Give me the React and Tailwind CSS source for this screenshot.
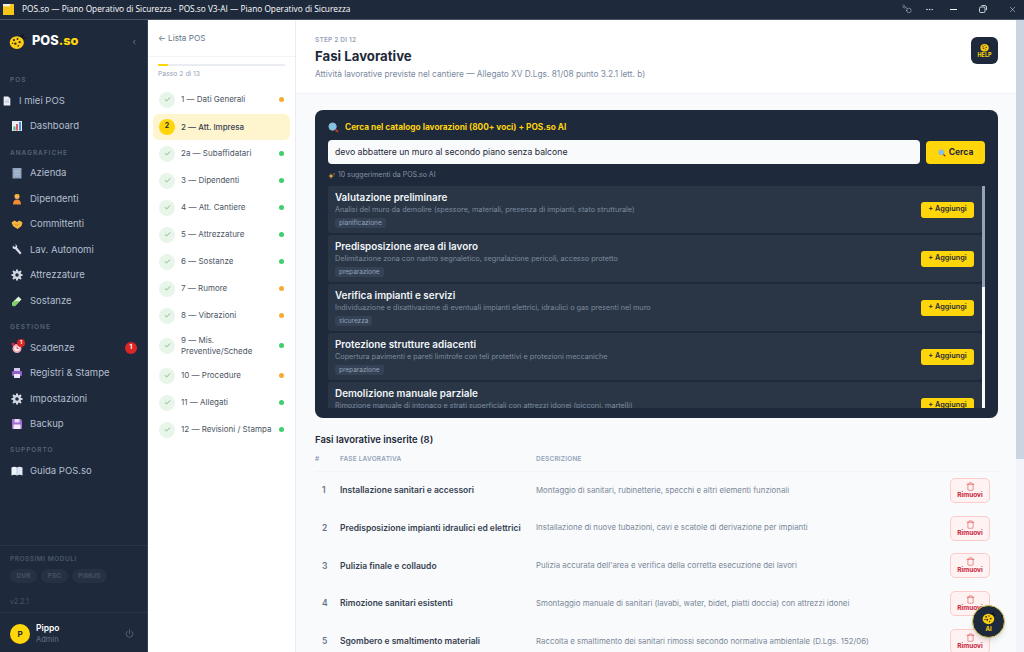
import React from "react";
import { Trash, Power, Check, Key, Ellipsis, X } from "lucide-react";

const Bug = ({ s = 16 }) => (
  <svg width={s} height={s} viewBox="0 0 24 24" className="shrink-0">
    <path d="M16 6 L21 2" stroke="#111" strokeWidth="1.6" />
    <path d="M18 8 L24 7" stroke="#111" strokeWidth="1.2" />
    <circle cx="17" cy="7" r="3.4" fill="#111827" />
    <ellipse cx="11" cy="13.5" rx="10" ry="9" fill="#facc15" />
    <circle cx="7" cy="10" r="1.6" fill="#3b2f0b" />
    <circle cx="12" cy="8.5" r="1.3" fill="#3b2f0b" />
    <circle cx="15" cy="13" r="1.6" fill="#3b2f0b" />
    <circle cx="9" cy="15" r="1.7" fill="#3b2f0b" />
    <circle cx="5" cy="14.5" r="1.1" fill="#3b2f0b" />
    <circle cx="13" cy="18" r="1.2" fill="#3b2f0b" />
  </svg>
);

const E = ({ n, s = 12 }) => {
  const m = {
    doc: <><path d="M4 1h11l5 5v17H4z" fill="#eef0f6" /><path d="M15 1l5 5h-5z" fill="#b9c0d4" /><path d="M7 10h10M7 13h10M7 16h10" stroke="#aab1c6" strokeWidth="1.2" /></>,
    chart: <><rect x="2" y="2" width="20" height="20" fill="#e8edf3" /><rect x="5" y="13" width="4" height="8" fill="#4caf7a" /><rect x="10" y="8" width="4" height="13" fill="#e0566b" /><rect x="16" y="4" width="4" height="17" fill="#4a90d9" /></>,
    building: <><rect x="3" y="2" width="18" height="21" fill="#8ea2bd" /><path d="M8 5v15M12 5v15M16 5v15" stroke="#c7d3e2" strokeWidth="2" strokeDasharray="2 1" /></>,
    person: <><circle cx="12" cy="7" r="5" fill="#f6b25e" /><path d="M4 23c0-7 3-10 8-10s8 3 8 10z" fill="#f08a35" /><path d="M7 5c1-4 9-4 10 0z" fill="#eab308" /></>,
    hands: <><path d="M1 9l6-4 5 3 5-3 6 4-2 7-8 6-9-6z" fill="#f5b63f" /><path d="M8 12l4 3 4-3" stroke="#c9831a" strokeWidth="1.5" fill="none" /></>,
    wrench: <><path d="M4 3l3 3 2-1 1-2-3-2C10 0 14 3 12 7l9 11-3 3L8 10C4 11 2 7 4 3z" fill="#d6dde6" /></>,
    gear: <><circle cx="12" cy="12" r="8" fill="#cfd6e0" /><path d="M12 1v22M1 12h22M4 4l16 16M20 4L4 20" stroke="#cfd6e0" strokeWidth="4" /><circle cx="12" cy="12" r="3.5" fill="#1e293b" /></>,
    tube: <><path d="M15 3l6 6L9 21c-2 2-5 2-6 0s-1-4 0-6z" fill="#dff5d8" /><path d="M9 12h8L9 21c-2 2-5 2-6 0s-1-4 0-6z" fill="#7ed35f" /></>,
    alarm: <><circle cx="12" cy="13" r="9" fill="#f2a6b5" /><circle cx="12" cy="13" r="5.5" fill="#fde8ec" /><path d="M12 9v4h3" stroke="#c2334a" strokeWidth="1.6" fill="none" /><circle cx="4" cy="4" r="3" fill="#e11d48" /><circle cx="20" cy="4" r="3" fill="#e11d48" /></>,
    printer: <><rect x="6" y="2" width="12" height="7" fill="#d9c8ef" /><rect x="2" y="8" width="20" height="10" rx="2" fill="#8d63c7" /><rect x="6" y="14" width="12" height="8" fill="#efe7f9" /></>,
    floppy: <><path d="M2 2h17l3 3v17H2z" fill="#a36bd6" /><rect x="7" y="2" width="10" height="7" fill="#e8dcf5" /><rect x="5" y="13" width="14" height="9" fill="#f4eefb" /></>,
    book: <><path d="M1 5c4-2 8-2 11 0v16c-3-2-7-2-11 0z" fill="#eef3fa" /><path d="M23 5c-4-2-8-2-11 0v16c3-2 7-2 11 0z" fill="#dfe8f4" /><path d="M12 5v16" stroke="#7da6d8" strokeWidth="1" /></>,
    search: <><circle cx="10" cy="10" r="8" fill="#7cc4e8" stroke="#9fb4c7" strokeWidth="2" /><path d="M16 16l6 6" stroke="#c0392b" strokeWidth="4" /></>,
    spark: <><path d="M9 3l2 7 7 2-7 2-2 8-2-8-6-2 6-2z" fill="#f5b63f" /><path d="M18 2l1 3 3 1-3 1-1 3-1-3-3-1 3-1z" fill="#f08a35" /></>,
  };
  return <svg width={s} height={s} viewBox="0 0 24 24" className="shrink-0">{m[n]}</svg>;
};

const Label = ({ children, cls = "" }) => (
  <div className={`pl-[10px] text-[6.5px] font-semibold tracking-[0.15em] text-[#566377] leading-[10px] ${cls}`}>{children}</div>
);
const Item = ({ icon, children, badge, shift }) => (
  <div className={`h-[25.5px] flex items-center text-[9.5px] text-[#b4bfce] gap-[7px] ${shift ? "pl-[2px]" : "pl-[11px]"}`}>
    <div className="relative flex">
      <E n={icon} s={shift ? 10 : 12} />
      {badge && <div className="absolute -top-[3px] left-[6px] w-[8px] h-[8px] rounded-full bg-[#dc2626] text-white text-[5px] font-bold flex items-center justify-center">1</div>}
    </div>
    <span>{children}</span>
    {badge && <div className="ml-auto mr-[10px] w-[12px] h-[12px] rounded-full bg-[#dc2626] text-white text-[6.5px] font-bold flex items-center justify-center">1</div>}
  </div>
);

const steps = [
  ["1 — Dati Generali", "o"], ["2 — Att. Impresa", "a"], ["2a — Subaffidatari", "g"], ["3 — Dipendenti", "g"],
  ["4 — Att. Cantiere", "g"], ["5 — Attrezzature", "g"], ["6 — Sostanze", "g"], ["7 — Rumore", "o"],
  ["8 — Vibrazioni", "o"], ["9 — Mis. Preventive/Schede", "g", true], ["10 — Procedure", "o"], ["11 — Allegati", "g"], ["12 — Revisioni / Stampa", "g"],
];

const Step = ({ t, k, tall }) =>
  k === "a" ? (
    <div className="h-[26px] my-[0.5px] flex items-center rounded-[6px] bg-[#fef5cf] pl-[6px] gap-[6px] text-[8px] font-medium text-[#374151]">
      <div className="w-[16px] h-[16px] rounded-full bg-[#ffd60a] flex items-center justify-center text-[7px] font-bold text-[#1e293b]">2</div>
      {t}
    </div>
  ) : (
    <div className={`${tall ? "h-[33px]" : "h-[27px]"} flex items-center pl-[6px] pr-[6px] gap-[6px] text-[8px] text-[#4b5563]`}>
      <div className="w-[16px] h-[16px] shrink-0 rounded-full bg-[#e8f5e9] flex items-center justify-center text-[#3d8b4a]"><Check size={7} strokeWidth={2} /></div>
      <span className="flex-1 leading-[11px] whitespace-nowrap">{tall ? <>9 — Mis.<br />Preventive/Schede</> : t}</span>
      <div className={`w-[5px] h-[5px] rounded-full ${k === "g" ? "bg-[#3ecf6e]" : "bg-[#f5ac32]"}`} />
    </div>
  );

const sugg = [
  ["Valutazione preliminare", "Analisi del muro da demolire (spessore, materiali, presenza di impianti, stato strutturale)", "pianificazione"],
  ["Predisposizione area di lavoro", "Delimitazione zona con nastro segnaletico, segnalazione pericoli, accesso protetto", "preparazione"],
  ["Verifica impianti e servizi", "Individuazione e disattivazione di eventuali impianti elettrici, idraulici o gas presenti nel muro", "sicurezza"],
  ["Protezione strutture adiacenti", "Copertura pavimenti e pareti limitrofe con teli protettivi e protezioni meccaniche", "preparazione"],
  ["Demolizione manuale parziale", "Rimozione manuale di intonaco e strati superficiali con attrezzi idonei (picconi, martelli)", ""],
];
const rows = [
  ["Installazione sanitari e accessori", "Montaggio di sanitari, rubinetterie, specchi e altri elementi funzionali"],
  ["Predisposizione impianti idraulici ed elettrici", "Installazione di nuove tubazioni, cavi e scatole di derivazione per impianti"],
  ["Pulizia finale e collaudo", "Pulizia accurata dell'area e verifica della corretta esecuzione dei lavori"],
  ["Rimozione sanitari esistenti", "Smontaggio manuale di sanitari (lavabi, water, bidet, piatti doccia) con attrezzi idonei"],
  ["Sgombero e smaltimento materiali", "Raccolta e smaltimento dei sanitari rimossi secondo normativa ambientale (D.Lgs. 152/06)"],
];

export default function App() {
  return (
    <div className="w-[1024px] h-[652px] overflow-hidden flex flex-col bg-[#f8fafc] font-['Inter',sans-serif]">
      <div className="h-[19.5px] shrink-0 bg-[#1e293b] border-b border-[#475569] flex items-center text-white text-[8.3px] font-['Open_Sans',sans-serif]">
        <svg width="11" height="11" viewBox="0 0 12 12" className="ml-[3px] mr-[8px]"><rect width="12" height="12" fill="#f5c518" /><rect width="8" height="2.5" fill="#f4f1e2" /></svg>
        <span>POS.so — Piano Operativo di Sicurezza - POS.so V3-AI — Piano Operativo di Sicurezza</span>
        <div className="ml-auto flex items-center text-[#d5dbe4]">
          <Key size={10} strokeWidth={1.1} className="mr-[13px] -scale-x-100" />
          <Ellipsis size={9} className="mr-[16px]" />
          <div className="w-[7px] h-[1px] bg-white mr-[22px]" />
          <svg width="8" height="8" viewBox="0 0 8 8" className="mr-[21px]" fill="none" stroke="#e5e7eb" strokeWidth="0.9"><rect x="0.5" y="2" width="5.5" height="5.5" rx="1.3" /><path d="M2.5 .6h3.5a1.5 1.5 0 0 1 1.5 1.5v3" /></svg>
          <X size={9} strokeWidth={1.2} className="mr-[7px] text-white" />
        </div>
      </div>
      <div className="flex flex-1 min-h-0">
        {/* sidebar */}
        <aside className="w-[148px] shrink-0 bg-[#1e293b] flex flex-col border-r border-[#334155]">
          <div className="h-[44px] flex items-center pl-[9px] gap-[6px]">
            <Bug s={17} />
            <span className="text-[12.8px] font-extrabold text-white leading-none">POS<span className="text-[#ffd60a]">.so</span></span>
            <span className="ml-auto mr-[11px] text-[#64748b] text-[9px]">‹</span>
          </div>
          <Label cls="mt-[11px] mb-[3.5px]">POS</Label>
          <Item icon="doc" shift>I miei POS</Item>
          <Item icon="chart">Dashboard</Item>
          <Label cls="mt-[8.5px] mb-[3px]">ANAGRAFICHE</Label>
          <Item icon="building">Azienda</Item>
          <Item icon="person">Dipendenti</Item>
          <Item icon="hands">Committenti</Item>
          <Item icon="wrench">Lav. Autonomi</Item>
          <Item icon="gear">Attrezzature</Item>
          <Item icon="tube">Sostanze</Item>
          <Label cls="mt-[8.5px] mb-[3px]">GESTIONE</Label>
          <Item icon="alarm" badge>Scadenze</Item>
          <Item icon="printer">Registri &amp; Stampe</Item>
          <Item icon="gear">Impostazioni</Item>
          <Item icon="floppy">Backup</Item>
          <Label cls="mt-[8px] mb-[3px]">SUPPORTO</Label>
          <Item icon="book">Guida POS.so</Item>
          <div className="mt-auto border-t border-[#2a3648] pt-[8px] pl-[10px] h-[67px]">
            <div className="text-[6.5px] font-semibold tracking-[0.08em] text-[#4b586b] leading-[10px]">PROSSIMI MODULI</div>
            <div className="flex gap-[4px] mt-[5px]">
              {["DVR", "PSC", "PIMUS"].map((p) => (
                <div key={p} className="h-[14px] px-[6.5px] rounded-full bg-[#263244] text-[#465366] text-[6.8px] font-semibold flex items-center">{p}</div>
              ))}
            </div>
            <div className="text-[7px] text-[#4b586b] mt-[14px]">v2.2.1</div>
          </div>
          <div className="h-[40px] border-t border-[#2a3648] pt-[2px] flex items-center pl-[10px] gap-[6px]">
            <div className="w-[20px] h-[20px] rounded-full bg-[#ffd60a] flex items-center justify-center text-[#1e293b] text-[8px] font-bold">P</div>
            <div className="leading-[11px]">
              <div className="text-[8.5px] font-semibold text-white">Pippo</div>
              <div className="text-[7.5px] text-[#64748b]">Admin</div>
            </div>
            <Power size={9} className="ml-auto mr-[13px] text-[#64748b]" />
          </div>
        </aside>
        {/* stepper */}
        <div className="w-[148px] shrink-0 bg-white border-r border-[#e9edf2] flex flex-col">
          <div className="h-[37px] border-b border-[#f1f5f9] pt-[1px] flex items-center pl-[10px] text-[8.2px] text-[#64748b]">← Lista POS</div>
          <div className="px-[10px] pt-[7px]">
            <div className="h-[2px] rounded bg-[#e9edf2]"><div className="h-full w-[10px] bg-[#ffd60a]" /></div>
            <div className="text-[6.8px] text-[#94a3b8] mt-[2px] leading-[11px]">Passo 2 di 13</div>
          </div>
          <div className="px-[5px] mt-[7.5px] flex flex-col">
            {steps.map(([t, k, tall]) => <Step key={t} t={t} k={k} tall={tall} />)}
          </div>
        </div>
        {/* main */}
        <main className="flex-1 min-w-0 relative overflow-hidden">
          <div className="h-[74px] bg-white border-b border-[#f1f5f9] pl-[19px] pr-[18px] pt-[15px] flex justify-between">
            <div>
              <div className="text-[6.5px] font-semibold tracking-[0.03em] text-[#94a3b8] leading-[10px]">STEP 2 DI 12</div>
              <div className="text-[13.2px] font-bold text-[#1e293b] leading-[20px] mt-[1px]">Fasi Lavorative</div>
              <div className="text-[8.3px] text-[#7b8aa0] leading-[12px] mt-[2px]">Attività lavorative previste nel cantiere — Allegato XV D.Lgs. 81/08 punto 3.2.1 lett. b)</div>
            </div>
            <div className="w-[27px] h-[27px] mt-[2px] rounded-[6px] bg-[#1e293b] flex flex-col items-center justify-center">
              <Bug s={10} />
              <span className="text-[5.5px] font-bold text-[#ffd60a] leading-[7px]">HELP</span>
            </div>
          </div>
          <div className="pl-[19px] pr-[18px] pt-[16px]">
            <section className="h-[308px] rounded-[8px] bg-[#1e293b] px-[13px] pt-[12px] flex flex-col">
              <div className="flex items-center gap-[6px] text-[8.3px] font-bold text-[#ffd60a] h-[12px]"><E n="search" s={11} /><span>Cerca nel catalogo lavorazioni (800+ voci) + POS.so AI</span></div>
              <div className="flex gap-[6px] mt-[6px]">
                <div className="flex-1 h-[24px] rounded-[4px] bg-[#f8fafc] flex items-center pl-[7px] pt-[2px] text-[8.7px] text-[#1f2937]">devo abbattere un muro al secondo piano senza balcone</div>
                <div className="w-[59px] h-[23px] mt-[1px] rounded-[4px] bg-[#ffd60a] flex items-center justify-center gap-[3px] pt-[1px] text-[8.5px] font-bold text-[#1e293b]"><E n="search" s={8} />Cerca</div>
              </div>
              <div className="flex items-center gap-[2px] mt-[7px] text-[7px] text-[#8592a6] h-[10px]"><E n="spark" s={8} />10 suggerimenti da POS.so AI</div>
              <div className="relative mt-[5px] flex-1 min-h-0 overflow-hidden flex flex-col gap-[2px] pr-[3px]">
                {sugg.map(([a, b, c]) => (
                  <div key={a} className="h-[47px] shrink-0 rounded-[3px] bg-[#2a3646] pl-[7px] pr-[8px] pt-[5px] flex justify-between">
                    <div className="flex flex-col items-start">
                      <div className="text-[9.9px] font-semibold text-[#f1f5f9] leading-[12px]">{a}</div>
                      <div className="text-[7.25px] text-[#7d8a9e] leading-[11px] mt-[1px]">{b}</div>
                      {c && <div className="mt-[3px] h-[10px] px-[4px] rounded-[2px] bg-[#354256] text-[6.5px] text-[#94a3b8] leading-[10px]">{c}</div>}
                    </div>
                    <div className="w-[53px] h-[16px] mt-[11px] rounded-[3px] bg-[#ffd60a] flex items-center justify-center text-[7.3px] font-semibold text-[#1e293b]">+ Aggiungi</div>
                  </div>
                ))}
                <div className="absolute right-0 top-0 bottom-0 w-[3px] bg-[#f8fafc]"><div className="h-[101px] bg-[#94a3b8]" /></div>
              </div>
              <div className="h-[10px] shrink-0" />
            </section>
            <div className="text-[9.5px] font-semibold text-[#1e293b] mt-[15px] leading-[14px]">Fasi lavorative inserite (8)</div>
            <div className="flex items-center h-[12px] mt-[7px] text-[6.5px] font-semibold tracking-[0.03em] text-[#94a3b8]">
              <div className="w-[25px]">#</div><div className="w-[196px]">FASE LAVORATIVA</div><div>DESCRIZIONE</div>
            </div>
            <div className="border-t border-[#f1f5f9] mt-[5px]">
              {rows.map(([a, b], i) => (
                <div key={a} className="h-[37.8px] flex items-center">
                  <div className="w-[25px] pl-[7px] text-[8.5px] font-semibold text-[#64748b]">{i + 1}</div>
                  <div className="w-[196px] text-[8.5px] font-semibold text-[#374151]">{a}</div>
                  <div className="flex-1 text-[7.85px] text-[#7b8798]">{b}</div>
                  <div className="w-[40px] h-[25px] mr-[8px] rounded-[5px] bg-[#fef2f2] border border-[#fecaca] flex flex-col items-center justify-center text-[#dc2626]">
                    <Trash size={9} strokeWidth={1.3} />
                    <span className="text-[6.5px] font-bold leading-[8px] text-[#c81e3a]">Rimuovi</span>
                  </div>
                </div>
              ))}
            </div>
          </div>
          <div className="absolute right-[11px] bottom-[14px] w-[33px] h-[33px] rounded-full bg-[#1e293b] border-[1.5px] border-[#d9c94e] flex flex-col items-center justify-center shadow-md">
            <Bug s={14} />
            <span className="text-[6px] font-bold text-[#ffd60a] leading-[8px]">AI</span>
          </div>
        </main>
        <div className="w-[8px] shrink-0 bg-[#f1f5f9]"><div className="h-[439px] bg-[#cbd5e1]" /></div>
      </div>
    </div>
  );
}
